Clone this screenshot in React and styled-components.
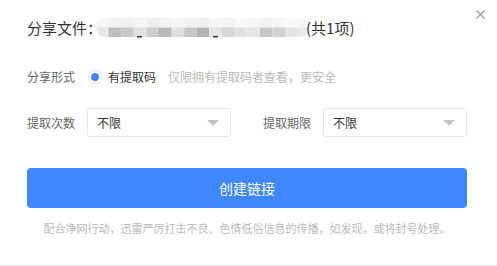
import React from "react";
import styled, { createGlobalStyle } from "styled-components";

const GlobalStyle = createGlobalStyle`
  html, body {
    margin: 0;
    padding: 0;
    background: #fff;
  }
  body {
    font-family: "Noto Sans CJK SC", "Noto Sans", sans-serif;
  }
`;

const Dialog = styled.div`
  position: relative;
  box-sizing: border-box;
  width: 497px;
  height: 266px;
  padding: 18px 30px 0 27px;
  background: #fff;
  border-bottom: 1px solid #e3e3e3;
`;

const Close = styled.button`
  position: absolute;
  top: 7px;
  right: 10px;
  width: 14px;
  height: 14px;
  padding: 0;
  border: 0;
  background: none;
  display: flex;
  align-items: center;
  justify-content: center;
  cursor: pointer;
`;

const Title = styled.div`
  display: flex;
  align-items: center;
  height: 20px;
  line-height: 20px;
  font-size: 15px;
  color: #333;
  white-space: nowrap;
`;

const Mosaic = styled.svg`
  display: block;
  margin-left: -6px;
  margin-right: -4px;
  flex: none;
`;

const Row = styled.div`
  display: flex;
  align-items: center;
  margin-top: ${(p) => p.$top}px;
  gap: ${(p) => p.$gap || 0}px;
`;

const Label = styled.span`
  font-size: 12px;
  line-height: 20px;
  color: #666;
  white-space: nowrap;
`;

const Radio = styled.span`
  box-sizing: border-box;
  width: 14px;
  height: 14px;
  margin-left: 13px;
  border: 1px solid #e2e2e2;
  border-radius: 50%;
  display: flex;
  align-items: center;
  justify-content: center;
  &::after {
    content: "";
    width: 8px;
    height: 8px;
    border-radius: 50%;
    background: #3f87ff;
  }
`;

const Option = styled.span`
  margin-left: 6px;
  font-size: 12px;
  line-height: 20px;
  color: #333;
`;

const Hint = styled.span`
  margin-left: 12px;
  font-size: 12px;
  line-height: 20px;
  color: #bbb;
`;

const Field = styled.div`
  display: flex;
  align-items: center;
  gap: 12px;
  flex: 1;
`;

const Select = styled.div`
  box-sizing: border-box;
  width: 144px;
  height: 29px;
  padding: 0 11px 0 9px;
  border: 1px solid #e6e6e6;
  border-radius: 3px;
  display: flex;
  align-items: center;
  justify-content: space-between;
  font-size: 12px;
  color: #333;
`;

const Arrow = styled.span`
  width: 0;
  height: 0;
  border-left: 6px solid transparent;
  border-right: 6px solid transparent;
  border-top: 6px solid #c4c4c4;
`;

const Button = styled.button`
  display: block;
  width: 440px;
  height: 40px;
  margin-top: 31px;
  border: 0;
  border-radius: 4px;
  background: #3f87ff;
  color: #fff;
  font-family: inherit;
  font-size: 14px;
  cursor: pointer;
`;

const Note = styled.div`
  margin-top: 12px;
  width: 440px;
  text-align: center;
  font-size: 11px;
  line-height: 16px;
  color: #bbb;
  white-space: nowrap;
`;

const top = ["#f7f7f7", "#f2f2f2", "#f0f0f0", "#f5f5f5", "#eeeeee", "#f3f3f3", "#f6f6f6", "#f1f1f1", "#efefef", "#f7f7f7", "#f4f4f4", "#f8f8f8", "#f6f6f6", "#f2f2f2", "#f5f5f5", "#f9f9f9", "#f7f7f7"];
const bottom = ["#e8e8e8", "#bdbdbd", "#c9c9c9", "#e2e2e2", "#cccccc", "#b9b9b9", "#dedede", "#c6c6c6", "#b4b4b4", "#e4e4e4", "#d8d8d8", "#e1e1e1", "#e6e6e6", "#c7c7c7", "#d1d1d1", "#e3e3e3", "#ececec"];

const FileMosaic = () => (
  <Mosaic width="214" height="20" viewBox="0 0 214 20">
    <defs>
      <clipPath id="mclip">
        <rect x="0" y="0" width="214" height="19" rx="9" />
      </clipPath>
    </defs>
    <g clipPath="url(#mclip)">
      {top.map((c, i) => (
        <rect key={"t" + i} x={i * 12.6} y="0" width="12.6" height="9.5" fill={c} />
      ))}
      {bottom.map((c, i) => (
        <rect key={"b" + i} x={i * 12.6} y="9.5" width="12.6" height="9.5" fill={c} />
      ))}
    </g>
    <rect x="41" y="18" width="5" height="1.5" fill="#333" />
    <rect x="117" y="18" width="5" height="1.5" fill="#333" />
  </Mosaic>
);

const SelectBox = ({ value }) => (
  <Select>
    <span>{value}</span>
    <Arrow />
  </Select>
);

export default function App() {
  return (
    <>
      <GlobalStyle />
      <Dialog>
        <Close aria-label="关闭">
          <svg width="9" height="9" viewBox="0 0 9 9">
            <path d="M0.5 0.5 L8.5 8.5 M8.5 0.5 L0.5 8.5" stroke="#999" strokeWidth="1.1" />
          </svg>
        </Close>
        <Title>
          分享文件：
          <FileMosaic />
          (共1项)
        </Title>
        <Row $top={29}>
          <Label>分享形式</Label>
          <Radio />
          <Option>有提取码</Option>
          <Hint>仅限拥有提取码者查看，更安全</Hint>
        </Row>
        <Row $top={21} $gap={32}>
          <Field>
            <Label>提取次数</Label>
            <SelectBox value="不限" />
          </Field>
          <Field>
            <Label>提取期限</Label>
            <SelectBox value="不限" />
          </Field>
        </Row>
        <Button>创建链接</Button>
        <Note>配合净网行动，迅雷严厉打击不良、色情低俗信息的传播，如发现，或将封号处理。</Note>
      </Dialog>
    </>
  );
}
